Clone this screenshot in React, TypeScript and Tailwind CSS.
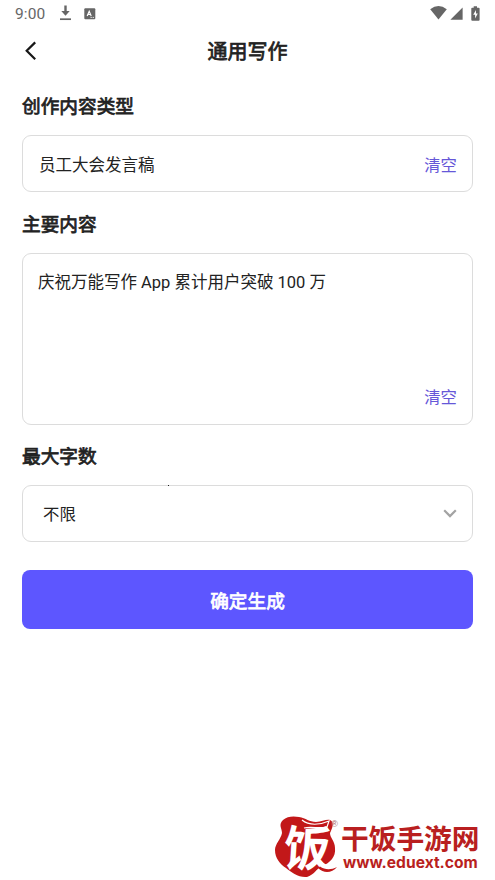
import React from "react";

function StatusBar() {
  return (
    <div className="flex h-[27px] items-center pl-[15px] pr-[15px] text-[#666666]">
      <span className="w-[44px] pt-px font-['Roboto',sans-serif] text-[15.5px] leading-[27px] tracking-[0.1px]">9:00</span>
      <svg className="-mt-px h-[16px] w-[13px]" viewBox="0 0 13 16" fill="none" stroke="currentColor">
        <path d="M6.5 0.5V9" strokeWidth="2.4" />
        <path d="M2.3 6.1 6.5 10.7 10.7 6.1Z" fill="currentColor" stroke="none" />
        <path d="M1 14.2H12" strokeWidth="1.7" />
      </svg>
      <svg className="ml-[12px] h-[12px] w-[12px]" viewBox="0 0 12 12">
        <rect x="0.3" y="0.3" width="11" height="11" rx="1" fill="currentColor" />
        <path d="M3.2 8 5.2 3.2 7.2 8M4 6.5H6.5" fill="none" stroke="white" strokeWidth="1.2" />
        <path d="M6.6 9.4H7.7M8.7 9.4H9.8" stroke="white" strokeWidth="1" />
      </svg>
      <div className="-mt-px ml-auto flex items-center">
        <svg className="h-[14px] w-[17px]" viewBox="0 0 17 14" fill="currentColor">
          <path d="M0.2 3.2Q8.5 -3 16.8 3.2L8.5 13.6Z" />
        </svg>
        <svg className="ml-[3px] h-[13px] w-[13px]" viewBox="0 0 13 13" fill="currentColor">
          <path d="M0.4 12.8 12.6 0.6V12.8Z" />
        </svg>
        <svg className="ml-[8px] h-[15px] w-[9px]" viewBox="0 0 9 15">
          <path d="M2.7 0.3H6V1.7H7.7Q8.6 1.7 8.6 2.6V13.8Q8.6 14.7 7.7 14.7H1.2Q0.3 14.7 0.3 13.8V2.6Q0.3 1.7 1.2 1.7H2.7Z" fill="currentColor" />
          <path d="M5 4 2.2 8.8H4.1V12.4L6.8 7.4H5Z" fill="white" />
        </svg>
      </div>
    </div>
  );
}

function SectionTitle({ children }: { children: React.ReactNode }) {
  return <h2 className="text-[18.67px] font-normal leading-[28px] text-[#222222] [-webkit-text-stroke:0.75px_currentColor]">{children}</h2>;
}

function Clear() {
  return <button className="text-[16.4px] leading-[24px] text-[#6657d8]">清空</button>;
}

function SiteMark() {
  return (
    <footer className="mt-auto flex h-[64px] pl-[275px]">
      <svg className="h-[64px] w-[66px] shrink-0 overflow-visible" viewBox="0 0 66 64">
        <path
          d="M8 4C12 0 19 0 24 1C31 2 34 6 41 6C47 6 51 3 55 4C60 6 57 13 55 17C55 22 60 25 60 32C61 41 55 47 47 50C41 53 39 59 32 61C24 62 16 56 11 52C5 48 0 42 0 34C0 28 6 23 7 17C7 12 3 9 8 4Z"
          fill="#c21819"
        />
        <path d="M27 4C34 10 45 9 54 5L52 11C44 13 36 10 29 12" fill="#c21819" stroke="white" strokeWidth="1.2" />
        <text transform="matrix(1.04 0.03 -0.07 1.07 8 49.5)" fill="white" fontFamily="Noto Sans CJK SC, sans-serif" fontWeight="700" fontSize="45">饭</text>
        <path d="M43 42C48 48 54 51 60 50C54 55 47 53 42 47Z" fill="white" />
        <path d="M45 50.5C50 54 56 54 62 51C57 57 49 58 43 52Z" fill="#c21819" />
        <text x="56.2" y="11" fill="#a96b6b" fontFamily="Liberation Sans, sans-serif" fontSize="9">®</text>
      </svg>
      <div className="flex w-[154px] flex-col text-[#b91f20]">
        <div className="mt-[7px] whitespace-nowrap text-[27.7px] font-bold leading-[33px]">干饭手游网</div>
        <div className="-mt-px whitespace-nowrap pl-[2px] font-['Inter',sans-serif] text-[15.6px] font-bold leading-[16px]">www.eduext.com</div>
      </div>
    </footer>
  );
}

export default function App() {
  return (
    <main className="flex h-[880px] w-[495px] flex-col overflow-hidden bg-white font-['Roboto','Noto_Sans_CJK_SC',sans-serif] text-[#222222]">
      <StatusBar />
      <header className="grid h-[48px] grid-cols-[1fr_auto_1fr] items-center px-[22px]">
        <svg className="h-[20px] w-[16px]" viewBox="0 0 16 20" fill="none" stroke="#171717" strokeWidth="2.2">
          <path d="M13.2 1.4 4.7 9.8 13.2 18.2" />
        </svg>
        <h1 className="pt-[2px] text-[20px] font-normal leading-[30px] [-webkit-text-stroke:0.75px_currentColor]">通用写作</h1>
      </header>

      <div className="flex flex-col px-[22px] pt-[18px]">
        <SectionTitle>创作内容类型</SectionTitle>
        <div className="mt-[14px] flex h-[57px] items-center justify-between rounded-[9px] border border-[#dcdcdc] pl-[16px] pr-[15px] pt-[4px]">
          <span className="pt-px text-[16.5px] leading-[24px]">员工大会发言稿</span>
          <Clear />
        </div>

        <div className="mt-[19px]">
          <SectionTitle>主要内容</SectionTitle>
        </div>
        <div className="mt-[14px] flex h-[172px] flex-col justify-between rounded-[9px] border border-[#dcdcdc] pb-[14px] pl-[15px] pr-[15px] pt-[17px]">
          <p className="text-[16.5px] leading-[24px]">庆祝万能写作 App 累计用户突破 100 万</p>
          <div className="flex justify-end"><Clear /></div>
        </div>

        <div className="mt-[18px]">
          <SectionTitle>最大字数</SectionTitle>
        </div>
        <div className="relative mt-[14px] flex h-[57px] items-center justify-between rounded-[9px] border border-[#dcdcdc] pl-[20px] pr-[15px]">
          <span className="absolute -top-px left-[145px] h-px w-px bg-[#222222]" />
          <span className="pt-[3px] text-[16.4px] leading-[24px]">不限</span>
          <svg className="h-[9px] w-[14px]" viewBox="0 0 14 9" fill="none" stroke="#a3a3a3" strokeWidth="2.2">
            <path d="M1.2 1.3 7 7.1 12.8 1.3" />
          </svg>
        </div>

        <button className="mt-[28px] h-[59px] rounded-[8px] bg-[#5d56ff] pt-[4px] text-[18.67px] font-normal text-white [-webkit-text-stroke:0.75px_currentColor]">确定生成</button>
      </div>

      <SiteMark />
    </main>
  );
}
